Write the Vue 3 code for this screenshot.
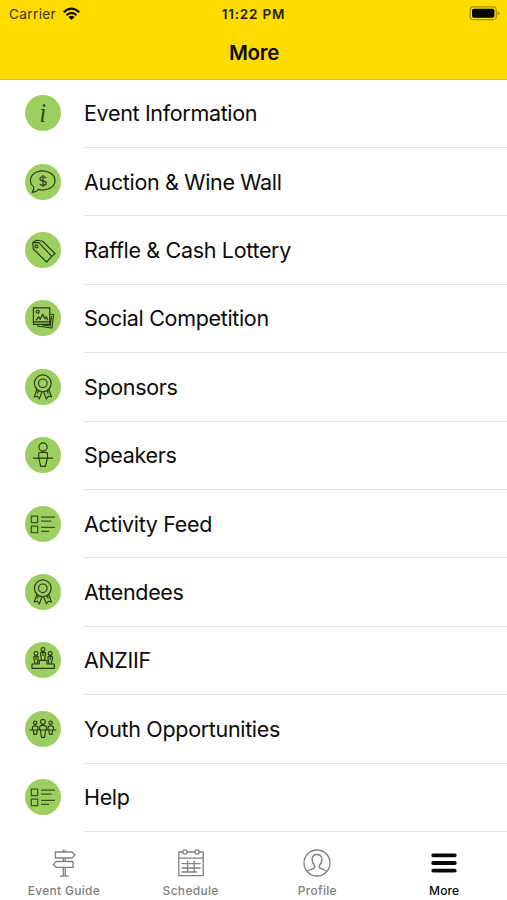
<script setup>
const items = [
  { label: 'Event Information', icon: 'info' },
  { label: 'Auction & Wine Wall', icon: 'auction' },
  { label: 'Raffle & Cash Lottery', icon: 'tag' },
  { label: 'Social Competition', icon: 'photo' },
  { label: 'Sponsors', icon: 'award' },
  { label: 'Speakers', icon: 'speaker' },
  { label: 'Activity Feed', icon: 'list' },
  { label: 'Attendees', icon: 'award' },
  { label: 'ANZIIF', icon: 'panel' },
  { label: 'Youth Opportunities', icon: 'team' },
  { label: 'Help', icon: 'list' },
]

const glyphs = {
  auction: 'M8.6 22.6C3.2 18.5 5 10.2 12.5 7.8C20.5 5.2 30 9.3 30 16.4C30 23.4 21.5 27.4 13.6 25.4C11.8 27.5 9.5 28.4 7.2 28.3C8.7 26.5 9.2 24.6 8.6 22.6Z',
  tag: 'M7.8 10.5L13.8 10.6L26.8 24.4L21.6 30L8.2 17ZM8.4 10.2L11.2 8.3L17.5 9.2L30 21.5L26.8 24.4M12.9 14.4a1.5 1.5 0 1 1-3 0a1.5 1.5 0 1 1 3 0',
  photo: 'M8.4 7.8H24.7V24.3H8.4ZM8.4 21.8H24.7M24.7 14L28.6 14.5L27 28L13 26.2V24.5M26.5 16L25.3 26L17 25M11 20.3L13.6 16.9L15.2 19.2L17.7 14.2L20 18.8L21.3 16.8L22.7 20.3M14.2 11.7a1.5 1.5 0 1 1-3 0a1.5 1.5 0 1 1 3 0',
  award: 'M26.2 14.3a8.4 8.4 0 1 1-16.8 0a8.4 8.4 0 1 1 16.8 0M22.1 14.3a4.3 4.3 0 1 1-8.6 0a4.3 4.3 0 1 1 8.6 0M11.8 20.8L9.3 28L12.4 27.2L14.3 30L16.9 23M23.8 20.8L26.5 28L23.4 27.2L21.4 30L18.7 23M13.1 22L12.5 24.7M22.5 22L23.1 24.7',
  speaker: 'M22.1 10a4.1 4.1 0 1 1-8.2 0a4.1 4.1 0 1 1 8.2 0M13.7 20.8V17.2Q13.7 15.4 15.5 15.4H20.7Q22.5 15.4 22.5 17.2V20.8M8 21.1H28M13.9 21.1L15.6 29.3H20.5L22.3 21.1',
  list: 'M6.3 10H12.7V16.5H6.3ZM6.3 20.2H12.7V26.7H6.3ZM16 11.1H30M16 15.2H26.5M16 21.4H30M16 25.3H24',
  panel: 'M14.2 22V18.3H22V22H29.3V26.4H7V22ZM19.9 7.4a1.9 1.9 0 1 1-3.8 0a1.9 1.9 0 1 1 3.8 0M12.9 11.4a1.9 1.9 0 1 1-3.8 0a1.9 1.9 0 1 1 3.8 0M27.1 11.4a1.9 1.9 0 1 1-3.8 0a1.9 1.9 0 1 1 3.8 0M16.7 18.3L15.4 11.6Q15.2 10.1 18 10.1Q20.8 10.1 20.6 11.6L19.4 18.3M10 21.8L8.6 15.5Q8.6 14 11 14Q13.6 14 13.2 16L12.1 21.8M24.1 21.8L22.9 16Q22.7 14 25.2 14Q27.7 14 27.5 15.8L26.2 21.8M18 10V14M11 14V18M25.2 14V18',
  team: 'M4.3 19H31.3M20.4 10.8a2.4 2.4 0 1 1-4.8 0a2.4 2.4 0 1 1 4.8 0M11.9 11.7a1.7 1.7 0 1 1-3.4 0a1.7 1.7 0 1 1 3.4 0M27.4 11.7a1.7 1.7 0 1 1-3.4 0a1.7 1.7 0 1 1 3.4 0M14.7 19.2V15.8Q14.7 14.3 18 14.3Q21.3 14.3 21.3 15.8V19.2M15.5 19.5L16.4 26.3H19.6L20.5 19.5M7.4 18.5V16.4Q7.4 14.8 10.2 14.8Q13 14.8 13 16.4V18.5M23 18.5V16.4Q23 14.8 25.7 14.8Q28.5 14.8 28.5 16.4V18.5M8.3 19L8.9 23.4H11.5L12.3 19M23.7 19L24.5 23.4H27L27.7 19',
}

const tabs = [
  { label: 'Event Guide', icon: 'guide' },
  { label: 'Schedule', icon: 'schedule' },
  { label: 'Profile', icon: 'profile' },
  { label: 'More', icon: 'more' },
]
</script>

<template>
  <div class="screen">
    <header class="header">
      <div class="status">
        <div class="carrier">
          <span>Carrier</span>
          <svg class="wifi" viewBox="0 0 20 15">
            <path d="M1.7 5.6Q10 -2 18.3 5.6M4.7 8.7Q10 3.9 15.3 8.7" />
            <path class="solid" d="M10 14L6.7 10.8Q10 8.2 13.3 10.8Z" />
          </svg>
        </div>
        <span class="time">11:22 PM</span>
        <svg class="battery" viewBox="0 0 32 15">
          <rect class="shell" x="1.1" y="0.9" width="26.2" height="12.8" rx="3.5" />
          <rect x="3" y="2.8" width="22.4" height="9" rx="1.8" />
          <path class="cap" d="M28.7 5Q32.4 7.3 28.7 9.6Z" />
        </svg>
      </div>
      <h1 class="title">More</h1>
    </header>

    <main class="list">
      <div v-for="item in items" :key="item.label" class="row">
        <div class="badge">
          <span v-if="item.icon === 'info'" class="info">i</span>
          <svg v-else viewBox="0 0 36 36">
            <path :class="{ soft: item.icon === 'list' }" :d="glyphs[item.icon]" />
            <path v-if="item.icon === 'auction'" d="M21.2 13.9Q20.2 12.7 18 12.7Q15 12.7 15 14.7Q15 16.4 18 16.9Q21.3 17.4 21.3 19.3Q21.3 21.3 18 21.3Q15.7 21.3 14.7 20M18 11V23" />
          </svg>
        </div>
        <div class="label">{{ item.label }}</div>
      </div>
    </main>

    <nav class="tabs">
      <div v-for="tab in tabs" :key="tab.label" class="tab" :class="{ active: tab.icon === 'more' }">
        <svg viewBox="0 0 30 30">
          <g v-if="tab.icon === 'guide'">
            <path d="M6.4 4H23L26 7L23 10H6.4ZM24 13.5H7.3L4.3 16.4L7.3 19.3H24ZM14.3 1.8V4M16.2 1.8V4M14.3 10V13.5M16.2 10V13.5M14.3 19.3V28M16.2 19.3V28M11 28.2H19.5" />
          </g>
          <g v-else-if="tab.icon === 'schedule'">
            <path d="M7 4H2.8V27.7H27.2V4H23M11 4H19M2.8 10.2H27.2M5.5 15.7H24.6M5.5 20H24.6M5.5 24H21M11.6 12.7V24.3M18.2 12.7V24.3" />
            <circle cx="9" cy="4" r="2.1" /><circle cx="21" cy="4" r="2.1" />
          </g>
          <g v-else-if="tab.icon === 'profile'">
            <circle cx="15" cy="15" r="13" />
            <path d="M5 23.4C7.5 21.4 10 21.2 12 20.2C13.2 19.5 13 18 12.2 17C8.5 12.5 9.7 6.5 15 6.5C20.3 6.5 21.5 12.5 17.8 17C17 18 16.8 19.5 18 20.2C20 21.2 22.5 21.4 25 23.4" />
          </g>
          <path v-else class="bars" d="M4.2 7.3H25.8M4.2 15H25.8M4.2 22.6H25.8" />
        </svg>
        <span>{{ tab.label }}</span>
      </div>
    </nav>
  </div>
</template>

<style>
body {
  margin: 0;
  background: #fff;
}
</style>

<style scoped>
.screen {
  width: 507px;
  height: 900px;
  display: flex;
  flex-direction: column;
  overflow: hidden;
  background: #fff;
  color: #0b0b0b;
  font-family: Inter, "Liberation Sans", sans-serif;
}
.header {
  height: 79.5px;
  box-sizing: border-box;
  flex: none;
  background: #fedc00;
  border-bottom: 1px solid #d9c132;
}
.status {
  display: grid;
  grid-template-columns: 1fr auto 1fr;
  align-items: center;
  height: 27px;
  padding: 0 6px 0 9px;
  font-size: 13.5px;
}
.carrier {
  display: flex;
  align-items: center;
  gap: 6px;
  color: #3c3500;
  letter-spacing: 0.4px;
}
.wifi {
  width: 19px;
  height: 14px;
  fill: none;
  stroke: #0b0b0b;
  stroke-width: 2.3;
}
.wifi .solid {
  fill: #0b0b0b;
  stroke: none;
}
.time {
  font-weight: 600;
  font-size: 13.5px;
  letter-spacing: 0.8px;
  margin-right: 3px;
  color: #252000;
}
.battery {
  width: 32px;
  height: 15px;
  justify-self: end;
}
.battery .shell {
  fill: none;
  stroke: #a58f00;
  stroke-width: 1.2;
}
.battery .cap {
  fill: #a58f00;
}
.title {
  margin: 0;
  height: 50px;
  line-height: 51px;
  padding-left: 1px;
  text-align: center;
  font-size: 20.5px;
  font-weight: 600;
  letter-spacing: -0.3px;
}
.list {
  height: 752.4px;
  flex: none;
  display: flex;
  flex-direction: column;
}
.row {
  flex: 1;
  display: flex;
  align-items: stretch;
  padding-left: 24.5px;
}
.badge {
  width: 36px;
  height: 36px;
  margin-right: 23.5px;
  margin-bottom: 1px;
  align-self: center;
  border-radius: 50%;
  background: #9dce60;
  display: flex;
  align-items: center;
  justify-content: center;
}
.badge svg {
  width: 36px;
  height: 36px;
  fill: none;
  stroke: #263a12;
  stroke-width: 1.15;
  stroke-linejoin: round;
}
.badge .soft {
  stroke: #3a5620;
  stroke-width: 1.25;
}
.info {
  font: italic 28px/36px "Liberation Serif", serif;
  color: #2d4317;
  transform: scaleX(0.85);
}
.label {
  flex: 1;
  display: flex;
  align-items: center;
  border-bottom: 1px solid #e3e3e5;
  font-size: 21.5px;
  letter-spacing: -0.33px;
  white-space: nowrap;
}
.tabs {
  flex: 1;
  display: grid;
  grid-template-columns: repeat(4, 1fr);
}
.tab {
  display: flex;
  flex-direction: column;
  align-items: center;
  padding: 16px 0 0 1px;
  color: #808080;
  font-size: 12px;
  line-height: 16px;
  font-weight: 500;
  letter-spacing: 0.3px;
}
.tab svg {
  width: 30px;
  height: 30px;
  margin-bottom: 5px;
  fill: none;
  stroke: currentColor;
  stroke-width: 1.3;
}
.tab .bars {
  stroke-width: 3.8;
  stroke-linecap: round;
}
.tab.active {
  color: #080808;
  letter-spacing: 0.1px;
}
</style>
